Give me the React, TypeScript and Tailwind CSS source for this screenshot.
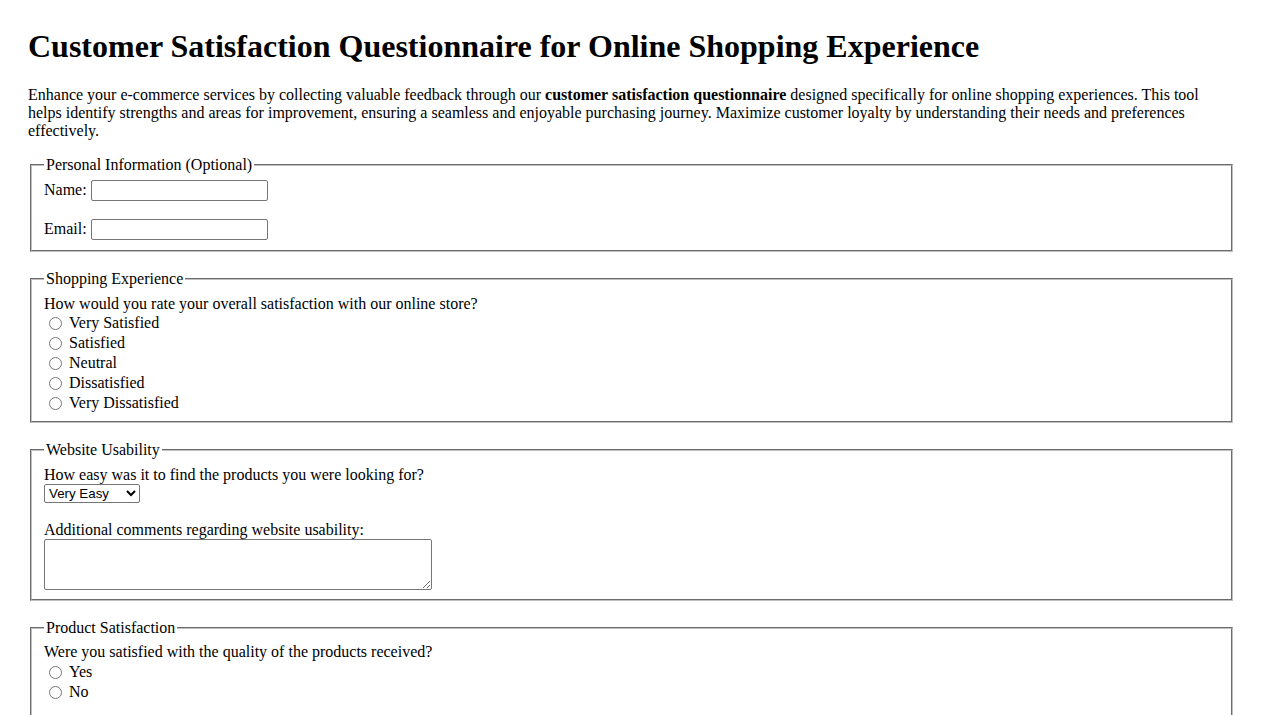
import React from "react";

const Radio = ({ name, label }: { name: string; label: string }) => (
  <label className="flex h-[20px] items-center">
    <input type="radio" name={name} className="ml-[5px] mr-[7px] h-[13px] w-[13px]" />
    <span>{label}</span>
  </label>
);

const fieldsetClass =
  "mx-[2px] mb-[18px] border-2 border-[#c0c0c0] [border-style:groove] px-[12px] pt-[5.6px]";

const inputClass =
  "h-[21px] w-[177px] rounded-[2px] border border-[#767676] bg-white px-[2px] font-['Liberation_Sans',Arial,sans-serif] text-[13.33px]";

const areaClass =
  "block h-[51px] w-[388px] rounded-[2px] border border-[#767676] bg-white px-[2px] font-['Liberation_Mono',monospace] text-[13.33px]";

export default function App() {
  return (
    <div className="min-h-screen bg-white px-[28px] pb-[28px] pt-[28px] font-['Liberation_Serif','Times_New_Roman',serif] text-[16px] leading-[18px] text-black">
      <h1 className="mb-[21px] text-[32px] font-bold leading-[37px]">
        Customer Satisfaction Questionnaire for Online Shopping Experience
      </h1>
      <p className="mb-[16px]">
        Enhance your e-commerce services by collecting valuable feedback through our{" "}
        <strong>customer satisfaction questionnaire</strong> designed specifically for online
        shopping experiences. This tool helps identify strengths and areas for improvement,
        ensuring a seamless and enjoyable purchasing journey. Maximize customer loyalty by
        understanding their needs and preferences effectively.
      </p>

      <form>
        {/* Personal info */}
        <fieldset className={`${fieldsetClass} pb-[10px]`}>
          <legend className="px-[2px]">Personal Information (Optional)</legend>
          <div className="flex h-[21px] items-center gap-[4px]">
            <label htmlFor="name">Name:</label>
            <input id="name" type="text" className={inputClass} />
          </div>
          <div className="mt-[18px] flex h-[21px] items-center gap-[4px]">
            <label htmlFor="email">Email:</label>
            <input id="email" type="email" className={inputClass} />
          </div>
        </fieldset>

        {/* Shopping experience */}
        <fieldset className={`${fieldsetClass} pb-[8px]`}>
          <legend className="px-[2px]">Shopping Experience</legend>
          <p className="pt-[2px]">How would you rate your overall satisfaction with our online store?</p>
          <Radio name="satisfaction" label="Very Satisfied" />
          <Radio name="satisfaction" label="Satisfied" />
          <Radio name="satisfaction" label="Neutral" />
          <Radio name="satisfaction" label="Dissatisfied" />
          <Radio name="satisfaction" label="Very Dissatisfied" />
        </fieldset>

        {/* Usability */}
        <fieldset className={`${fieldsetClass} pb-[9px]`}>
          <legend className="px-[2px]">Website Usability</legend>
          <p className="pt-[1px]">How easy was it to find the products you were looking for?</p>
          <select className="block h-[19px] w-[96px] rounded-[2px] border border-[#767676] bg-white font-['Liberation_Sans',Arial,sans-serif] text-[13.33px]">
            <option>Very Easy</option>
            <option>Easy</option>
            <option>Neutral</option>
            <option>Difficult</option>
            <option>Very Difficult</option>
          </select>
          <p className="mt-[18px]">Additional comments regarding website usability:</p>
          <textarea className={areaClass} />
        </fieldset>

        {/* Product */}
        <fieldset className={`${fieldsetClass} pb-[9px]`}>
          <legend className="px-[2px]">Product Satisfaction</legend>
          <p className="pt-[1px]">Were you satisfied with the quality of the products received?</p>
          <div className="pt-[1px]">
            <Radio name="quality" label="Yes" />
            <Radio name="quality" label="No" />
          </div>
          <p className="mt-[18px]">Please describe any issues with the products:</p>
          <textarea className={areaClass} />
        </fieldset>
      </form>
    </div>
  );
}
